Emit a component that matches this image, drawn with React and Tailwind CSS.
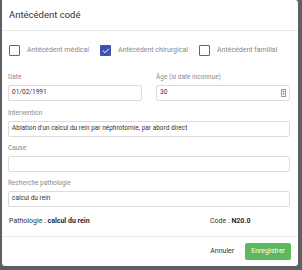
import { Check } from "lucide-react";

function Box({ checked, label }) {
  return (
    <label className="flex items-center gap-[7px]">
      {checked ? (
        <span className="w-[11px] h-[11px] rounded-[1px] bg-[#3f51b5] flex items-center justify-center">
          <Check className="w-[8px] h-[8px] text-white" strokeWidth={3} />
        </span>
      ) : (
        <span className="w-[11px] h-[11px] rounded-[1px] border border-[#666] bg-white" />
      )}
      <span className="text-[7px] text-[#888]">{label}</span>
    </label>
  );
}

function Field({ label, value, className = "", spinner = false }) {
  return (
    <div className={className}>
      <div className="text-[6.5px] leading-[8px] text-[#8a8a8a] h-[8px] mb-[4px]">{label}</div>
      <div className="h-[16px] border border-[#dcdcdc] rounded-[2px] flex items-center pl-[3px] pr-[3px] text-[6.5px] text-[#333]">
        <span className="flex-1">{value}</span>
        {spinner && (
          <span className="w-[5px] h-[8px] border border-[#999] flex flex-col items-center justify-center text-[3px] leading-[3px] text-[#555]">
            <span>▲</span>
            <span>▼</span>
          </span>
        )}
      </div>
    </div>
  );
}

export default function App() {
  return (
    <div className="w-[302px] h-[270px] bg-[#5d5f63] overflow-hidden" style={{ fontFamily: "Roboto, 'Liberation Sans', sans-serif" }}>
      <div className="ml-[2px] w-[296px] h-[266px] bg-white rounded-b-[3px] rounded-tr-[3px] flex flex-col">
        <div className="h-[31px] border-b border-[#e9e9e9] flex items-center pl-[7px]">
          <h3 className="text-[9.5px] text-[#333]">Antécédent codé</h3>
        </div>

        <div className="flex-1 pl-[6px] pr-[8px]">
          <div className="flex items-center pt-[14px] pl-[1px] h-[25px]">
            <div className="w-[91px]"><Box label="Antécédent médical" /></div>
            <div className="w-[99px]"><Box checked label="Antécédent chirurgical" /></div>
            <Box label="Antécédent familial" />
          </div>

          <div className="grid grid-cols-2 gap-x-[14px] mt-[17px]">
            <Field label="Date" value="01/02/1991" />
            <Field label="Âge (si date inconnue)" value="30" spinner />
          </div>

          <Field className="mt-[8px]" label="Intervention" value="Ablation d'un calcul du rein par néphrotomie, par abord direct" />
          <Field className="mt-[7px]" label="Cause" value="" />
          <Field className="mt-[7px]" label="Recherche pathologie" value="calcul du rein" />

          <div className="flex mt-[9px] text-[7px] text-[#333] pl-[1px]">
            <div className="w-[201px]">
              Pathologie : <span className="font-bold text-[#1e2a3a]">calcul du rein</span>
            </div>
            <div>
              Code : <span className="font-bold text-[#1e2a3a]">N20.0</span>
            </div>
          </div>
        </div>

        <div className="h-[30px] border-t border-[#e9e9e9] flex items-center justify-end gap-[11px] pr-[7px]">
          <button className="text-[7px] text-[#333]">Annuler</button>
          <button className="h-[17px] px-[6px] rounded-[2px] bg-[#5cb85c] text-white text-[7px]">Enregistrer</button>
        </div>
      </div>
    </div>
  );
}
